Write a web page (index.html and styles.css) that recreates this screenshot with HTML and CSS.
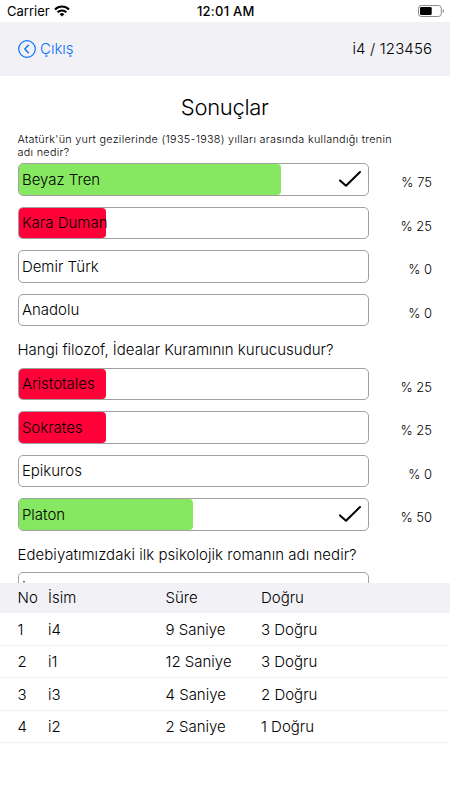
FILE: index.html
```html
<!DOCTYPE html>
<html lang="tr">
<head>
<meta charset="utf-8">
<title>Sonuçlar</title>
<link rel="stylesheet" href="styles.css">
</head>
<body>
<div class="status">
  <div class="carrier"><span>Carrier</span>
    <svg class="wifi" width="16" height="12" viewBox="0 0 16 12"><path d="M1 4.4a10 10 0 0 1 14 0" fill="none" stroke="#000" stroke-width="2.1"/><path d="M3.6 7.2a6.3 6.3 0 0 1 8.8 0" fill="none" stroke="#000" stroke-width="2"/><path d="M8 11.6 5.7 9.2a3.3 3.3 0 0 1 4.6 0z"/></svg>
  </div>
  <div class="clock">12:01 AM</div>
  <svg class="battery" width="27" height="12" viewBox="0 0 27 12"><rect x=".5" y=".5" width="22.8" height="11" rx="2.8" fill="none" stroke="#8c8c8c"/><rect x="2" y="2" width="11.7" height="8" rx="1.3"/><path d="M24.7 4v4q1.3-.6 1.3-2t-1.3-2z" fill="#8c8c8c"/></svg>
</div>
<header class="nav">
  <a class="back"><svg width="18" height="18" viewBox="0 0 18 18" fill="none" stroke="#0a72fb" stroke-width="1.2"><circle cx="9" cy="9" r="8.3"/><path d="M10.4 5.2 6.8 9l3.6 3.8" stroke-width="1.4" stroke-linecap="round" stroke-linejoin="round"/></svg><span>Çıkış</span></a>
  <span class="room">i4 / 123456</span>
</header>
<main class="results">
  <h1>Sonuçlar</h1>
  <section class="question">
    <h2 class="small">Atatürk'ün yurt gezilerinde (1935-1938) yılları arasında kullandığı trenin<br>adı nedir?</h2>
    <div class="row"><div class="option"><i class="fill right" style="width:75%"></i><span>Beyaz Tren</span><svg class="check" width="24" height="18" viewBox="0 0 24 18"><path d="M2 10.4 8 15.8 22 2"/></svg></div><b>% 75</b></div>
    <div class="row"><div class="option"><i class="fill wrong" style="width:25%"></i><span>Kara Duman</span></div><b>% 25</b></div>
    <div class="row"><div class="option"><span>Demir Türk</span></div><b>% 0</b></div>
    <div class="row"><div class="option"><span>Anadolu</span></div><b>% 0</b></div>
  </section>
  <section class="question">
    <h2>Hangi filozof, İdealar Kuramının kurucusudur?</h2>
    <div class="row"><div class="option"><i class="fill wrong" style="width:25%"></i><span>Aristotales</span></div><b>% 25</b></div>
    <div class="row"><div class="option"><i class="fill wrong" style="width:25%"></i><span>Sokrates</span></div><b>% 25</b></div>
    <div class="row"><div class="option"><span>Epikuros</span></div><b>% 0</b></div>
    <div class="row"><div class="option"><i class="fill right" style="width:50%"></i><span>Platon</span><svg class="check" width="24" height="18" viewBox="0 0 24 18"><path d="M2 10.4 8 15.8 22 2"/></svg></div><b>% 50</b></div>
  </section>
  <section class="question">
    <h2 class="wide">Edebiyatımızdaki ilk psikolojik romanın adı nedir?</h2>
    <div class="row"><div class="option last"><span>İntibah</span></div></div>
  </section>
</main>
<div class="table">
  <div class="tr th"><span>No</span><span>İsim</span><span>Süre</span><span>Doğru</span></div>
  <div class="tr"><span>1</span><span>i4</span><span>9 Saniye</span><span>3 Doğru</span></div>
  <div class="tr"><span>2</span><span>i1</span><span>12 Saniye</span><span>3 Doğru</span></div>
  <div class="tr"><span>3</span><span>i3</span><span>4 Saniye</span><span>2 Doğru</span></div>
  <div class="tr"><span>4</span><span>i2</span><span>2 Saniye</span><span>1 Doğru</span></div>
</div>
</body>
</html>
```
FILE: styles.css
```css
* { box-sizing: border-box; }
body { margin: 0; width: 450px; height: 800px; overflow: hidden; background: #fff; color: #000; font: 300 15px/20px Inter, sans-serif; display: flex; flex-direction: column; }
.status { height: 22px; flex: none; display: grid; grid-template-columns: 1fr auto 1fr; align-items: center; padding: 0 5.5px 0 7px; font-size: 13px; }
.carrier { display: flex; align-items: center; gap: 4.4px; font-weight: 400; }
.clock { font-weight: 500; letter-spacing: .25px; }
.battery { justify-self: end; }
.nav { height: 54px; flex: none; background: #f2f1f6; display: flex; align-items: center; justify-content: space-between; padding: 0 18px; }
.back { display: flex; align-items: center; gap: 4px; color: #0a72fb; }
.room { letter-spacing: .15px; margin-right: -.2px; }
.results { height: 507px; flex: none; overflow: hidden; padding: 18px 18px 0 17.5px; }
h1 { margin: 0 0 1px; font-size: 22px; line-height: 26px; font-weight: 300; text-align: center; letter-spacing: -.3px; }
h2 { margin: 0; font-size: 15px; line-height: 20px; font-weight: 300; white-space: nowrap; padding: 3px 0 7px; height: 30.5px; }
h2.wide { letter-spacing: .04px; }
h2.small { font-size: 10.8px; line-height: 13px; height: 42px; padding: 12px 0 0; letter-spacing: .3px; }
.row { display: flex; justify-content: space-between; height: 32.5px; margin-bottom: 11px; }
.option { position: relative; width: 351.9px; border: 1px solid #a0a0a0; border-radius: 5px; padding: 1px 3.4px 0; display: flex; align-items: center; justify-content: space-between; }
.option.last { padding-top: 4px; }
.option span { position: relative; }
.fill { position: absolute; left: 0; top: 0; bottom: 0; border-radius: 4px; }
.right { background: #86e760; }
.wrong { background: #ff0039; }
.check { position: relative; margin: -1px 3px 0 0; fill: none; stroke: #000; stroke-width: 2; stroke-linecap: round; stroke-linejoin: round; }
.row b { font-weight: 300; font-size: 13px; line-height: 20px; padding-top: 9.4px; }
.table { flex: none; }
.tr { display: grid; grid-template-columns: 30.5px 117.5px 95.5px 1fr; align-items: center; padding: 1.6px 0 0 17.5px; height: 32.6px; border-bottom: 1px solid #f2f1f6; }
.th { height: 30px; padding-top: 0; background: #f2f1f6; border: 0; }
```
